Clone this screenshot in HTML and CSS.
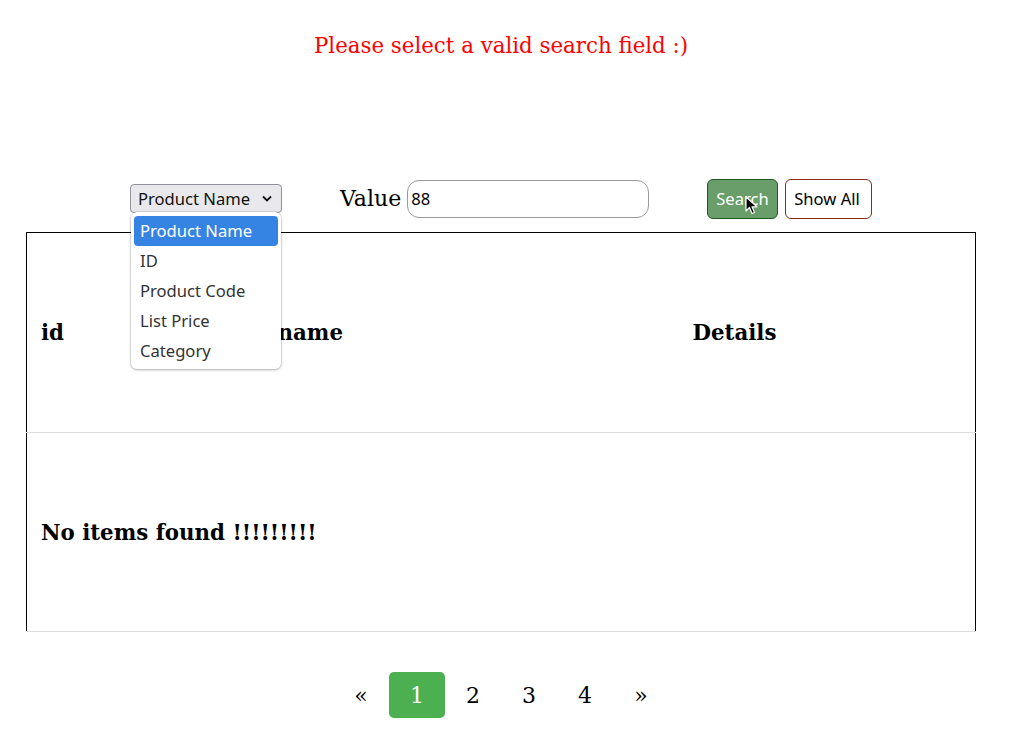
FILE: index.html
```html
<!DOCTYPE html>
<html>
<head>
<meta charset="utf-8">
<link rel="stylesheet" href="styles.css">
</head>
<body>
<div class="page">
  <p class="message">Please select a valid search field :)</p>
  <div class="controls">
    <div class="select-wrap">
      <div class="select">Product Name <svg class="chev" width="12" height="8" viewBox="0 0 12 8"><path d="M2 1.5 L6 5.5 L10 1.5" fill="none" stroke="#111" stroke-width="1.8"/></svg></div>
      <ul class="dropdown">
        <li class="selected">Product Name</li>
        <li>ID</li>
        <li>Product Code</li>
        <li>List Price</li>
        <li>Category</li>
      </ul>
    </div>
    <div class="value-group">
      <span class="label">Value</span>
      <div class="input">88</div>
    </div>
    <div class="buttons">
      <div class="btn search">Search<svg class="cursor" width="14" height="20" viewBox="0 0 14 20"><path d="M1 1 L1 15 L4.5 11.5 L7 17.5 L9.5 16.5 L7 10.8 L12 10.8 Z" fill="#000" stroke="#fff" stroke-width="1.2" stroke-linejoin="round"/></svg></div>
      <div class="btn showall">Show All</div>
    </div>
  </div>
  <table class="results">
    <thead>
      <tr>
        <th class="c-id">id</th>
        <th class="c-name">name</th>
        <th class="c-det">Details</th>
      </tr>
    </thead>
    <tbody>
      <tr>
        <td colspan="3" class="empty">No items found !!!!!!!!!</td>
      </tr>
    </tbody>
  </table>
  <div class="pagination">
    <span class="pg">&laquo;</span>
    <span class="pg active">1</span>
    <span class="pg">2</span>
    <span class="pg">3</span>
    <span class="pg">4</span>
    <span class="pg">&raquo;</span>
  </div>
</div>
</body>
</html>
```
FILE: styles.css
```css
html, body {
  margin: 0;
  padding: 0;
  background: #fff;
}
body {
  font-family: "DejaVu Serif", serif;
  color: #000;
}
.page {
  width: 1009px;
}
.message {
  margin: 0;
  padding-top: 31px;
  padding-right: 7px;
  height: 149px;
  box-sizing: border-box;
  text-align: center;
  color: #ff0000;
  font-size: 21.33px;
  line-height: 30px;
}
.controls {
  display: flex;
  align-items: center;
  padding-left: 130px;
  height: 33px;
  margin-top: 33px;
  position: relative;
  z-index: 2;
}
.select-wrap {
  position: relative;
}
.select {
  box-sizing: border-box;
  width: 152px;
  height: 29px;
  border: 1px solid #8f8f9d;
  border-radius: 4px;
  background: #e9e9ed;
  font-family: "Noto Sans", sans-serif;
  font-size: 16.6px;
  color: #111;
  display: flex;
  align-items: center;
  padding-left: 7px;
}
.chev {
  margin-left: auto;
  margin-right: 8px;
}
.dropdown {
  position: absolute;
  left: 1px;
  top: 28px;
  width: 150px;
  box-sizing: border-box;
  margin: 0;
  padding: 4px 3px 3px;
  list-style: none;
  background: #fff;
  border-radius: 6px;
  box-shadow: 0 0 0 1px rgba(0,0,0,0.08), 0 1px 3px rgba(0,0,0,0.25);
  font-family: "Noto Sans", sans-serif;
  font-size: 16.6px;
  color: #333;
}
.dropdown li {
  height: 30px;
  line-height: 30px;
  padding-left: 6px;
  border-radius: 4px;
}
.dropdown li.selected {
  background: #3584e4;
  color: #fff;
}
.value-group {
  display: flex;
  align-items: center;
  margin-left: 58px;
}
.label {
  font-size: 22px;
  margin-right: 6px;
}
.input {
  box-sizing: border-box;
  width: 242px;
  height: 38px;
  border: 1px solid #9a9a9a;
  border-radius: 12px;
  font-family: "Noto Sans", sans-serif;
  font-size: 16.6px;
  display: flex;
  align-items: center;
  padding-left: 3px;
  color: #000;
}
.buttons {
  display: flex;
  align-items: center;
  margin-left: 58px;
  gap: 7px;
}
.btn {
  box-sizing: border-box;
  height: 40px;
  display: flex;
  align-items: center;
  font-family: "Noto Sans", sans-serif;
  font-size: 16.6px;
  border-radius: 6px;
}
.search {
  position: relative;
  width: 71px;
  padding-left: 8px;
  background: #699d69;
  border: 1px solid #1e5c1e;
  color: #fff;
}
.cursor {
  position: absolute;
  left: 37px;
  top: 16px;
}
.showall {
  width: 87px;
  padding-left: 8px;
  background: #fff;
  border: 1px solid #8b2a14;
  color: #000;
}
.results {
  margin-left: 26px;
  margin-top: 17px;
  width: 950px;
  border-collapse: collapse;
  border-top: 1px solid #000;
  border-left: 1px solid #000;
  border-right: 1px solid #000;
  table-layout: fixed;
}
.results th {
  text-align: left;
  font-size: 21.33px;
  font-weight: bold;
  height: 200px;
  box-sizing: border-box;
  padding: 0 14px;
  border-bottom: 1px solid #ddd;
}
.c-id { width: 237px; }
.c-name { width: 415px; }
.results td.empty {
  font-size: 21.33px;
  font-weight: bold;
  height: 199px;
  box-sizing: border-box;
  padding: 0 14px;
  border-bottom: 1px solid #ddd;
}
.pagination {
  display: flex;
  justify-content: center;
  margin-top: 40px;
  padding-right: 7px;
}
.pg {
  width: 56px;
  height: 46px;
  display: flex;
  align-items: center;
  justify-content: center;
  font-size: 22px;
  color: #000;
  border-radius: 5px;
}
.pg.active {
  background: #4caf50;
  color: #fff;
}
```
